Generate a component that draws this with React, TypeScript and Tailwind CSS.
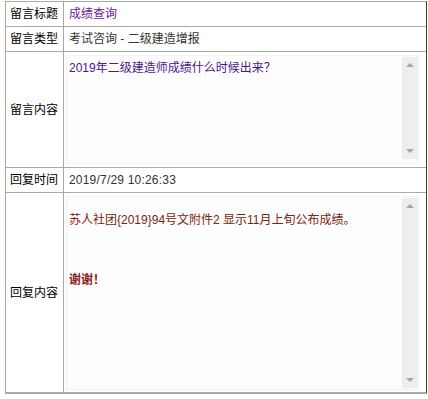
const FONT = { fontFamily: '"Liberation Sans", "Noto Sans CJK SC", sans-serif' };

function FakeScrollbar() {
  return (
    <div className="flex w-[16px] shrink-0 flex-col items-center justify-between bg-[#eeeeee] py-[6px]">
      <span className="h-0 w-0 border-x-[4px] border-b-[4px] border-x-transparent border-b-[#a6a6a6]" />
      <span className="h-0 w-0 border-x-[4px] border-t-[4px] border-x-transparent border-t-[#a6a6a6]" />
    </div>
  );
}

function Label({ children }: { children: React.ReactNode }) {
  return (
    <div className="flex w-[58px] shrink-0 items-center border-r border-[#a9a9a9] pl-[4px] text-[12px] text-black">
      {children}
    </div>
  );
}

export default function App() {
  return (
    <div className="h-[399px] w-[428px] bg-white pt-[1px]" style={FONT}>
      <div className="ml-[5px] w-[422px] border-t border-l border-r border-b-2 border-t-[#a9a9a9] border-l-[#a9a9a9] border-r-[#3a3a3a] border-b-[#a9a9a9]">
        <div className="flex h-[25px] border-b border-[#a9a9a9]">
          <Label>留言标题</Label>
          <div className="flex flex-1 items-center pl-[5px] text-[12px] text-[#6a1b9a]">成绩查询</div>
        </div>

        <div className="flex h-[25px] border-b border-[#a9a9a9]">
          <Label>留言类型</Label>
          <div className="flex flex-1 items-center pl-[5px] text-[12px] text-[#333]">
            考试咨询 - 二级建造增报
          </div>
        </div>

        <div className="flex h-[116px] border-b border-[#a9a9a9]">
          <Label>留言内容</Label>
          <div className="flex-1 pt-[3px] pb-[3px] pl-[2px] pr-[7px]">
            <div className="flex h-full border border-[#f2f2f2] bg-[#fdfdfd]">
              <div className="flex-1 pl-[2px] pt-[4px] text-[12px] leading-[16px] text-[#4b1590]">
                2019年二级建造师成绩什么时候出来？
              </div>
              <div className="flex py-[1px] pb-[4px]">
                <FakeScrollbar />
              </div>
            </div>
          </div>
        </div>

        <div className="flex h-[25px] border-b border-[#a9a9a9]">
          <Label>回复时间</Label>
          <div className="flex flex-1 items-center pl-[5px] text-[12px] tracking-[0.2px] text-[#333]">
            2019/7/29 10:26:33
          </div>
        </div>

        <div className="flex h-[199px]">
          <Label>回复内容</Label>
          <div className="flex-1 pt-[3px] pb-[2px] pl-[2px] pr-[7px]">
            <div className="flex h-full border border-[#f2f2f2] bg-[#fdfdfd]">
              <div className="flex-1 pl-[2px] pt-[13px] text-[12px] leading-[20px] text-[#7a2410]">
                <p>苏人社团{"{2019}"}94号文附件2 显示11月上旬公布成绩。</p>
                <p className="h-[20px]" />
                <p className="h-[20px]" />
                <p className="font-bold text-[#8b1a1a]">谢谢！</p>
              </div>
              <div className="flex py-[1px]">
                <FakeScrollbar />
              </div>
            </div>
          </div>
        </div>
      </div>
    </div>
  );
}
